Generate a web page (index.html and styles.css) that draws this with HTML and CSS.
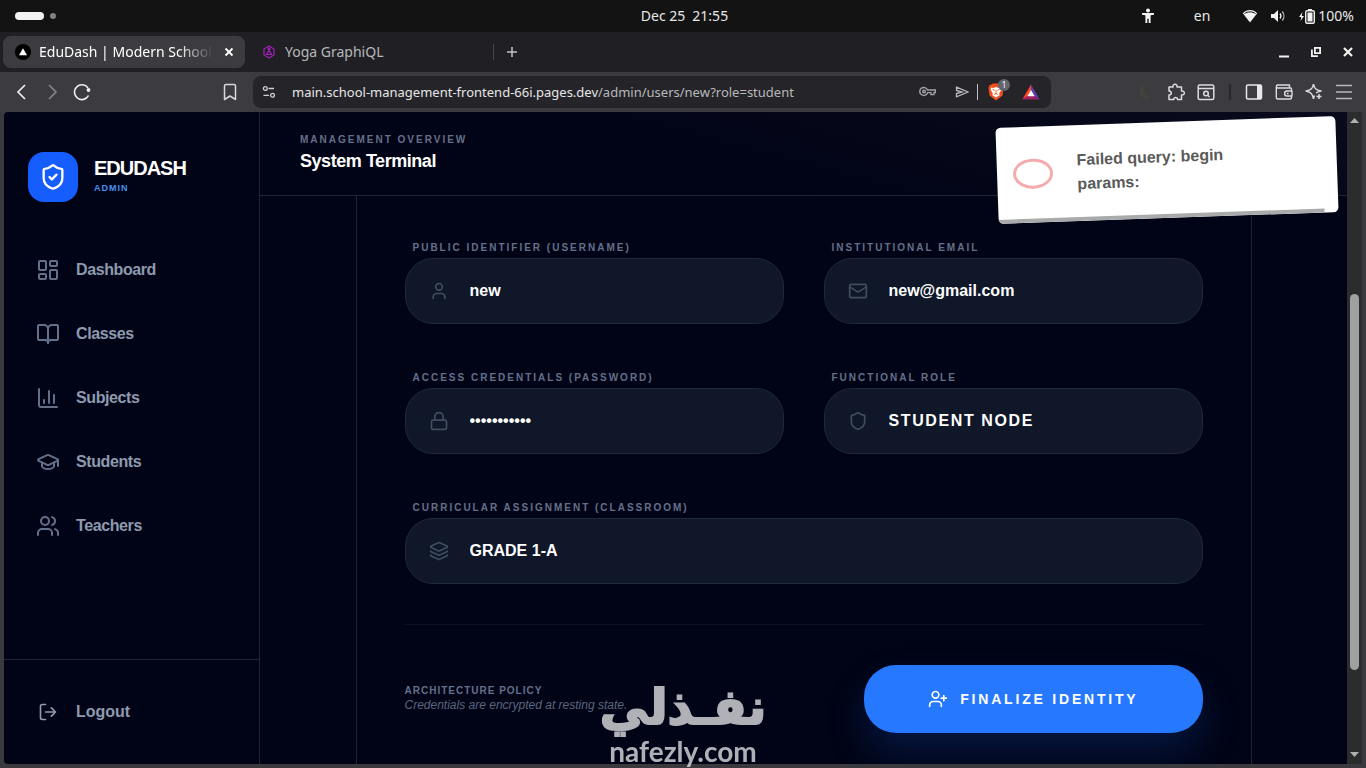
FILE: index.html
```html
<!DOCTYPE html>
<html lang="en">
<head>
<meta charset="utf-8">
<meta name="viewport" content="width=device-width, initial-scale=1">
<title>EduDash | Modern School</title>
<link rel="stylesheet" href="styles.css">
</head>
<body>
<div class="system-bar">
  <div class="workspaces"><span class="workspace-active"></span><span class="workspace-dot"></span></div>
  <time class="clock">Dec 25&ensp;21:55</time>
  <div class="tray">
    <svg class="tray-access" width="14" height="16" viewBox="0 0 14 16" fill="#f2f2f2"><circle cx="7" cy="2.500" r="2"/><path d="M1 5h12v1.800l-3.400.5V15H7.700v-4.200H6.300V15H4.400V7.300L1 6.800z"/></svg>
    <span class="tray-lang">en</span>
    <svg width="16" height="14" viewBox="0 0 16 14"><path d="M8 13.500.8 4.200C3 2 5.400 1 8 1s5 1 7.200 3.200z" fill="#f2f2f2"/><path d="M2.500 4.600C5.500 2.300 10.500 2.300 13.500 4.600" fill="none" stroke="#131313" stroke-width="1"/></svg>
    <svg width="16" height="14" viewBox="0 0 16 14" fill="none" stroke="#f2f2f2" stroke-width="1.300"><path d="M1 5h3l4-4v12L4 9H1z" fill="#f2f2f2" stroke="none"/><path d="M10 4.500a4 4 0 0 1 0 5"/><path d="M12.300 2.500a7 7 0 0 1 0 9" opacity=".7"/></svg>
    <div class="battery">
      <svg width="17" height="16" viewBox="0 0 17 16"><path d="M4.500 4 1 9h2.300L2.500 13 6 8H3.700z" fill="#f2f2f2"/><path d="M10 1h4v2h-4z" fill="#f2f2f2"/><rect x="7.700" y="2.700" width="8.600" height="12.600" rx="1.500" fill="none" stroke="#f2f2f2" stroke-width="1.400"/><path d="M9.500 4.500h5v9h-5z" fill="#f2f2f2"/></svg>
      <span>100%</span>
    </div>
  </div>
</div>

<div class="tab-strip">
  <div class="tab tab-active">
    <svg width="16" height="16" viewBox="0 0 16 16"><circle cx="8" cy="8" r="8" fill="#000"/><path d="m8 4.200 4 7H4z" fill="#fff"/></svg>
    <span class="tab-title tab-title-fade">EduDash | Modern School</span>
    <button class="tab-close" aria-label="Close tab"><svg width="10" height="10" viewBox="0 0 10 10" stroke="#fff" stroke-width="1.800"><path d="m1.500 1.500 7 7m0-7-7 7"/></svg></button>
  </div>
  <div class="tab tab-idle">
    <svg width="12" height="14" viewBox="0 0 12 14" fill="none" stroke="#a020b8" stroke-width="1.200"><path d="m6 1 5 3v6l-5 3-5-3V4z"/><path d="M6 4v2M3.500 9.500 6 5.500l2.500 4z"/><circle cx="6" cy="4" r=".8"/></svg>
    <span class="tab-title">Yoga GraphiQL</span>
  </div>
  <button class="new-tab" aria-label="New tab"><svg width="12" height="12" viewBox="0 0 12 12" stroke="#c4c4c8" stroke-width="1.500"><path d="M6 1v10M1 6h10"/></svg></button>
  <div class="window-controls">
    <button aria-label="Minimize"><svg width="12" height="12" viewBox="0 0 12 12"><path d="M1 9.500h10v2H1z" fill="#f2f2f2"/></svg></button>
    <button aria-label="Restore"><svg width="12" height="12" viewBox="0 0 12 12" fill="none" stroke="#f2f2f2" stroke-width="1.800"><path d="M4.900 1.900h5.200v5.200H4.900z"/><path d="M1.900 3.500v6.600h6"/></svg></button>
    <button aria-label="Close"><svg width="12" height="12" viewBox="0 0 12 12" stroke="#f2f2f2" stroke-width="2.200"><path d="m2 2 8 8m0-8-8 8"/></svg></button>
  </div>
</div>

<div class="toolbar">
  <button class="tool" aria-label="Back"><svg width="16" height="18" viewBox="0 0 16 18" fill="none" stroke="#eeeef0" stroke-width="1.700"><path d="M11 2 4 9l7 7"/></svg></button>
  <button class="tool" aria-label="Forward"><svg width="16" height="18" viewBox="0 0 16 18" fill="none" stroke="#85858a" stroke-width="1.700"><path d="m5 2 7 7-7 7"/></svg></button>
  <button class="tool" aria-label="Reload"><svg width="18" height="18" viewBox="0 0 18 18" fill="none" stroke="#eeeef0" stroke-width="1.600"><path d="M15.500 12.500A7.400 7.400 0 1 1 15 5"/><circle cx="15.500" cy="7" r="1.900" fill="#eeeef0" stroke="none"/></svg></button>
  <button class="tool tool-bookmark" aria-label="Bookmark"><svg width="14" height="18" viewBox="0 0 14 18" fill="none" stroke="#d8d8dc" stroke-width="1.500" stroke-linejoin="round"><path d="M1.500 3c0-1 .6-1.500 1.500-1.500h8c1 0 1.500.5 1.500 1.500v13.500L7 13l-5.500 3.500z"/></svg></button>
  <div class="address-bar">
    <svg width="14" height="14" viewBox="0 0 14 14" fill="none" stroke="#d0d0d4" stroke-width="1.300"><circle cx="3.300" cy="3.500" r="1.900"/><path d="M6.500 3.500h5.500M1.500 10.300h5.500"/><circle cx="10.500" cy="10.300" r="1.900"/></svg>
    <button class="url">main.school-management-frontend-66i.pages.dev<span class="url-path">/admin/users/new?role=student</span></button>
    <svg width="18" height="12" viewBox="0 0 18 12" fill="none" stroke="#a2a2a8" stroke-width="1.400"><path d="M8.500 4h7.800v2.600h-1.300v2h-3v-2H8.600A4 4 0 1 1 8.500 4z"/><circle cx="5" cy="5.500" r="1.300"/></svg>
    <svg class="send" width="14" height="12" viewBox="0 0 14 12" fill="none" stroke="#b8b8bd" stroke-width="1.300"><path d="M1.500 1.200 13 6 1.500 10.800V7.500L7 6 1.500 4.500z"/></svg>
    <span class="address-divider"></span>
    <span class="shield">
      <svg width="16" height="18" viewBox="0 0 16 18"><path d="m3.500 1.500 1-1h7l1 1 2 .5 1 3-1 7.500-6.500 5L1.500 12.500.5 5l1-3z" fill="#f0501e"/><path d="m3 4.500 2.200.6L8 4l2.800 1.100L13 4.500l.3 2.500-2 3 .2 2.200L8 14.500l-3.500-2.300.2-2.200-2-3z" fill="#fff"/><path d="m4.500 6.500 2.200.8m4.800-.8-2.200.8M8 7v3.500m-2 1 2-1 2 1" stroke="#f0501e" stroke-width=".9" fill="none"/></svg>
      <span class="shield-count">1</span>
    </span>
    <svg width="18" height="16" viewBox="0 0 18 16"><path d="M9 .5.300 15.500 9 10z" fill="#ff4724"/><path d="M.3 15.500h17.400L9 10z" fill="#9e1f63"/><path d="M9 .5l8.700 15L9 10z" fill="#5b3bb0"/><path d="m9 6 3.700 6.200H5.300z" fill="#fff"/></svg>
  </div>
  <button class="tool" aria-label="Dark mode"><svg width="12" height="16" viewBox="0 0 12 16"><path d="M5 1a7 7 0 1 0 6 12A9 9 0 0 1 5 1z" fill="#42423a"/></svg></button>
  <button class="tool" aria-label="Extensions"><svg width="20" height="20" viewBox="0 0 20 20" fill="none" stroke="#dcdce0" stroke-width="1.500" stroke-linejoin="round"><path d="M3 5h4c-.7-3.800 4.700-3.800 4 0h4.500v4c3.800-.5 3.800 4.500 0 4v4.500h-4c.3-2.800-4-2.800-3.700 0H3V13c3-.2 3-4 0-4z"/></svg></button>
  <button class="tool" aria-label="Search page"><svg width="18" height="18" viewBox="0 0 18 18" fill="none" stroke="#dcdce0" stroke-width="1.500"><rect x="1.200" y="2" width="15.600" height="14.500" rx="1.500"/><path d="M1 5.500h16M10.500 12l2 2"/><circle cx="9" cy="10.500" r="2.300"/></svg></button>
  <span class="tool-divider"></span>
  <button class="tool" aria-label="Side panel"><svg width="18" height="18" viewBox="0 0 18 18"><rect x="1.500" y="2" width="15" height="14" rx="1.500" fill="none" stroke="#e8e8ec" stroke-width="1.500"/><path d="M12 2h4.500v14H12z" fill="#e8e8ec"/></svg></button>
  <button class="tool" aria-label="Wallet"><svg width="18" height="18" viewBox="0 0 18 18" fill="none" stroke="#dcdce0" stroke-width="1.400" stroke-linejoin="round"><path d="M16.500 8V6c0-.7-.3-1-1-1h-13c-1.500 0-1.500-3 0-3h12v3M1.300 4v10.500c0 1 .5 1.500 1.500 1.500h12.500c.8 0 1.200-.5 1.200-1.200V13M17 8h-5c-3.200 0-3.200 5 0 5h5z"/><path d="M12 10.500h1.500"/></svg></button>
  <button class="tool" aria-label="Assistant"><svg width="18" height="18" viewBox="0 0 18 18" fill="none" stroke="#dcdce0" stroke-width="1.500" stroke-linejoin="round"><path d="M8.500 1c.7 4.500 2.500 6 7.500 7-2.500.6-4 1.200-5 2M8.500 16c-.7-5-2.500-7-7.500-8 5-1 6.800-2.500 7.500-7M8.500 16c.2-1.500.5-2.500 1-3.500M14 11v5M11.500 13.500h5"/></svg></button>
  <button class="tool" aria-label="Menu"><svg width="18" height="16" viewBox="0 0 18 16" stroke="#b8b8bc" stroke-width="1.600"><path d="M1 1.500h16M1 8h16M1 14.500h16"/></svg></button>
</div>

<div class="viewport">
  <aside class="sidebar">
    <div class="brand">
      <span class="brand-mark"><svg class="icon" width="28" height="28" viewBox="0 0 24 24"><path d="M20 13c0 5-3.500 7.500-7.660 8.950a1 1 0 0 1-.67-.01C7.500 20.500 4 18 4 13V6a1 1 0 0 1 1-1c2 0 4.500-1.200 6.240-2.720a1.170 1.170 0 0 1 1.520 0C14.510 3.810 17 5 19 5a1 1 0 0 1 1 1z"/><path d="m9 12 2 2 4-4"/></svg></span>
      <div class="brand-text"><strong class="brand-name">EDUDASH</strong><span class="brand-role">ADMIN</span></div>
    </div>
    <nav class="nav">
      <a class="nav-link" href="#dashboard"><svg class="icon" width="24" height="24" viewBox="0 0 24 24"><rect x="3" y="3" width="7" height="9" rx="1"/><rect x="14" y="3" width="7" height="5" rx="1"/><rect x="14" y="12" width="7" height="9" rx="1"/><rect x="3" y="16" width="7" height="5" rx="1"/></svg>Dashboard</a>
      <a class="nav-link" href="#classes"><svg class="icon" width="24" height="24" viewBox="0 0 24 24"><path d="M12 7v14"/><path d="M3 18a1 1 0 0 1-1-1V4a1 1 0 0 1 1-1h5a4 4 0 0 1 4 4 4 4 0 0 1 4-4h5a1 1 0 0 1 1 1v13a1 1 0 0 1-1 1h-6a3 3 0 0 0-3 3 3 3 0 0 0-3-3z"/></svg>Classes</a>
      <a class="nav-link" href="#subjects"><svg class="icon" width="24" height="24" viewBox="0 0 24 24"><path d="M3 3v16a2 2 0 0 0 2 2h16M18 17V9M13 17V5M8 17v-3"/></svg>Subjects</a>
      <a class="nav-link" href="#students"><svg class="icon" width="24" height="24" viewBox="0 0 24 24"><path d="M21.420 10.920a1 1 0 0 0-.02-1.840L12.830 5.180a2 2 0 0 0-1.660 0L2.600 9.080a1 1 0 0 0 0 1.830l8.570 3.910a2 2 0 0 0 1.660 0z"/><path d="M22 10v6M6 12.500V16a6 3 0 0 0 12 0v-3.500"/></svg>Students</a>
      <a class="nav-link" href="#teachers"><svg class="icon" width="24" height="24" viewBox="0 0 24 24"><path d="M16 21v-2a4 4 0 0 0-4-4H6a4 4 0 0 0-4 4v2M22 21v-2a4 4 0 0 0-3-3.870M16 3.130a4 4 0 0 1 0 7.750"/><circle cx="9" cy="7" r="4"/></svg>Teachers</a>
    </nav>
    <div class="sidebar-foot">
      <button class="logout"><svg class="icon" width="20" height="20" viewBox="0 0 24 24"><path d="M9 21H5a2 2 0 0 1-2-2V5a2 2 0 0 1 2-2h4M16 17l5-5-5-5M21 12H9"/></svg>Logout</button>
    </div>
  </aside>

  <main class="main">
    <header class="page-head">
      <p class="eyebrow">MANAGEMENT OVERVIEW</p>
      <h1 class="page-title">System Terminal</h1>
    </header>
    <form class="card">
      <div class="fields">
        <div class="field">
          <label class="label" for="username">PUBLIC IDENTIFIER (USERNAME)</label>
          <div class="control"><svg class="icon" width="20" height="20" viewBox="0 0 24 24"><path d="M19 21v-2a4 4 0 0 0-4-4H9a4 4 0 0 0-4 4v2"/><circle cx="12" cy="7" r="4"/></svg><input class="value" id="username" type="text" value="new"></div>
        </div>
        <div class="field">
          <label class="label" for="email">INSTITUTIONAL EMAIL</label>
          <div class="control"><svg class="icon" width="20" height="20" viewBox="0 0 24 24"><rect x="2" y="4" width="20" height="16" rx="2"/><path d="m22 7-8.970 5.700a1.940 1.940 0 0 1-2.060 0L2 7"/></svg><input class="value" id="email" type="email" value="new@gmail.com"></div>
        </div>
        <div class="field">
          <label class="label" for="password">ACCESS CREDENTIALS (PASSWORD)</label>
          <div class="control"><svg class="icon" width="20" height="20" viewBox="0 0 24 24"><rect x="3" y="11" width="18" height="11" rx="2"/><path d="M7 11V7a5 5 0 0 1 10 0v4"/></svg><input class="value" id="password" type="password" value="password123"></div>
        </div>
        <div class="field">
          <label class="label" for="role">FUNCTIONAL ROLE</label>
          <div class="control"><svg class="icon" width="20" height="20" viewBox="0 0 24 24"><path d="M20 13c0 5-3.500 7.500-7.660 8.950a1 1 0 0 1-.67-.01C7.500 20.500 4 18 4 13V6a1 1 0 0 1 1-1c2 0 4.500-1.200 6.240-2.720a1.170 1.170 0 0 1 1.520 0C14.510 3.810 17 5 19 5a1 1 0 0 1 1 1z"/></svg><select class="value value-role" id="role"><option>STUDENT NODE</option></select></div>
        </div>
        <div class="field field-wide">
          <label class="label" for="classroom">CURRICULAR ASSIGNMENT (CLASSROOM)</label>
          <div class="control"><svg class="icon" width="20" height="20" viewBox="0 0 24 24"><path d="M12.830 2.180a2 2 0 0 0-1.660 0L2.600 6.080a1 1 0 0 0 0 1.830l8.580 3.910a2 2 0 0 0 1.660 0l8.580-3.900a1 1 0 0 0 0-1.830z"/><path d="M2 12a1 1 0 0 0 .58.910l8.600 3.910a2 2 0 0 0 1.650 0l8.580-3.900A1 1 0 0 0 22 12M2 17a1 1 0 0 0 .58.910l8.600 3.910a2 2 0 0 0 1.650 0l8.580-3.900A1 1 0 0 0 22 17"/></svg><select class="value" id="classroom"><option>GRADE 1-A</option></select></div>
        </div>
      </div>
      <div class="actions">
        <div class="policy">
          <p class="policy-title">ARCHITECTURE POLICY</p>
          <p class="policy-note">Credentials are encrypted at resting state.</p>
        </div>
        <button class="submit" type="button"><svg class="icon" width="20" height="20" viewBox="0 0 24 24"><path d="M16 21v-2a4 4 0 0 0-4-4H6a4 4 0 0 0-4 4v2M19 8v6M22 11h-6"/><circle cx="9" cy="7" r="4"/></svg>FINALIZE IDENTITY</button>
      </div>
    </form>
  </main>

  <div class="scrollbar" aria-hidden="true">
    <svg class="scroll-arrow" width="9" height="16" viewBox="0 0 9 16"><path d="M0 11h9L4.500 6z" fill="#b0b0b0"/></svg>
    <span class="scroll-before"></span><span class="scroll-thumb"></span><span class="scroll-after"></span>
    <svg class="scroll-arrow" width="9" height="16" viewBox="0 0 9 16"><path d="M0 4h9L4.500 9z" fill="#b0b0b0"/></svg>
  </div>

  <div class="toast" role="alert">
    <span class="toast-icon"></span>
    <p class="toast-text">Failed query: begin<br>params:</p>
    <span class="toast-progress"></span>
  </div>
</div>

<div class="watermark">
  <span class="watermark-ar" lang="ar" dir="rtl">نفـذلي</span>
  <span class="watermark-en">nafezly.com</span>
</div>
</body>
</html>
```
FILE: styles.css
```css
* { box-sizing: border-box; }

body {
  position: relative;
  display: flex;
  flex-direction: column;
  height: 100vh;
  margin: 0;
  overflow: hidden;
  background: #3a3a3e;
  color: #fff;
  font-family: "Liberation Sans", Arial, sans-serif;
}

p, h1 { margin: 0; }

button {
  display: flex;
  align-items: center;
  justify-content: center;
  padding: 0;
  border: 0;
  background: none;
  color: inherit;
  font: inherit;
}

svg { display: block; flex: none; }

.icon {
  fill: none;
  stroke: currentColor;
  stroke-width: 2;
  stroke-linecap: round;
  stroke-linejoin: round;
}

/* Desktop bar */
.system-bar {
  display: grid;
  grid-template-columns: 1fr auto 1fr;
  align-items: center;
  flex: none;
  height: 32px;
  padding: 0 12px 0 15px;
  background: #131313;
  color: #e8e8e8;
  font: 14px/20px "Noto Sans", sans-serif;
}

.workspaces { display: flex; align-items: center; gap: 6px; }
.workspace-active { width: 29px; height: 8px; border-radius: 4px; background: #f2f2f2; }
.workspace-dot { width: 6px; height: 6px; border-radius: 50%; background: #828282; }
.tray { display: flex; align-items: center; justify-content: flex-end; gap: 12px; }
.tray-access { margin-right: 27px; }
.tray-lang { margin-right: 20px; }
.battery { display: flex; align-items: center; gap: 3px; }

/* Tabs */
.tab-strip {
  display: flex;
  align-items: center;
  flex: none;
  height: 40px;
  padding: 0 6px 0 3px;
  background: #202024;
  font: 14px/20px "Noto Sans", sans-serif;
}

.tab { display: flex; align-items: center; gap: 8px; height: 32px; }
.tab-active { width: 242px; padding: 0 8px 0 12px; border-radius: 8px; background: #3b3b40; }
.tab-idle { width: 249px; height: 16px; gap: 10px; padding-left: 18px; border-right: 1px solid #46464b; color: #b8b8bc; }
.tab-title { flex: 1; overflow: hidden; white-space: nowrap; }
.tab-title-fade { -webkit-mask-image: linear-gradient(90deg, #000 80%, transparent); mask-image: linear-gradient(90deg, #000 80%, transparent); }
.tab-close { width: 16px; height: 16px; }
.new-tab { width: 36px; height: 32px; }
.window-controls { display: flex; gap: 8px; margin-left: auto; }
.window-controls button { width: 24px; height: 24px; }

/* Navigation toolbar */
.toolbar {
  display: flex;
  align-items: center;
  flex: none;
  height: 40px;
  padding: 0 7px;
  background: #3b3b40;
  font: 13px/20px "Noto Sans", sans-serif;
}

.tool { flex: none; width: 30px; height: 30px; }
.tool-bookmark { margin-left: 118px; }
.tool-divider { width: 2px; height: 16px; margin: 0 8px; background: #29292d; }

.address-bar {
  display: flex;
  align-items: center;
  flex: 1;
  min-width: 0;
  height: 32px;
  gap: 16px;
  margin: 0 80px 0 8px;
  padding: 0 11px 0 9px;
  border-radius: 8px;
  background: #252529;
}

.url {
  flex: 1;
  justify-content: flex-start;
  min-width: 0;
  overflow: hidden;
  color: #e6e6e8;
  white-space: nowrap;
}
.url-path { color: #b8b8bc; }
.address-divider { width: 1px; height: 16px; margin-left: -8px; background: #c0c0c4; }
.shield { position: relative; margin: 0 2px 0 -6px; }
.send { margin-left: 2px; }
.shield-count {
  position: absolute;
  top: -4px;
  right: -6px;
  width: 12px;
  height: 12px;
  border-radius: 50%;
  background: #62646f;
  color: #fff;
  font-size: 8px;
  line-height: 12px;
  text-align: center;
}

/* Page frame */
.viewport {
  position: relative;
  display: flex;
  flex: 1;
  min-height: 0;
  margin: 0 4px 4px;
  overflow: hidden;
  border-radius: 4px;
  background: #010416;
}

.sidebar {
  display: flex;
  flex-direction: column;
  flex: none;
  width: 256px;
  border-right: 1px solid #202434;
}

.brand { display: flex; align-items: center; gap: 16px; padding: 40px 24px 36px; }
.brand-mark {
  display: grid;
  place-items: center;
  width: 50px;
  height: 50px;
  border-radius: 16px;
  background: #155dfc;
}
.brand-text { display: flex; flex-direction: column; gap: 2px; padding-bottom: 4px; }
.brand-name { font-size: 20px; line-height: 24px; letter-spacing: -1px; }
.brand-role { color: #4a8ff0; font-size: 9px; font-weight: 700; line-height: 12px; letter-spacing: 1px; }

.nav { display: flex; flex: 1; flex-direction: column; gap: 8px; padding: 4px 24px; }
.nav-link {
  display: flex;
  align-items: center;
  gap: 16px;
  height: 56px;
  padding: 0 8px;
  color: #8e9aae;
  font-size: 16px;
  font-weight: 700;
  letter-spacing: -0.025em;
  text-decoration: none;
}
.nav-link .icon { color: #64708a; }

.sidebar-foot { padding: 24px; border-top: 1px solid #202434; }
.logout { gap: 18px; height: 56px; padding: 0 10px; color: #8e9aae; font-size: 16px; font-weight: 700; }

/* Main column */
.main { display: flex; flex: 1; flex-direction: column; min-width: 0; overflow: hidden; }
.page-head {
  flex: none;
  height: 84px;
  padding: 20px 40px 0;
  border-bottom: 1px solid #202434;
  background: linear-gradient(15deg, #010416 40%, #090b1c);
}
.eyebrow, .label, .policy-title { color: #64708a; font-size: 10px; font-weight: 700; }
.eyebrow { line-height: 16px; letter-spacing: 2px; }
.page-title { font-size: 18px; line-height: 26px; letter-spacing: -0.025em; }

.card {
  flex: 1 0 auto;
  width: calc(100% - 80px);
  max-width: 896px;
  margin: 0 auto;
  padding: 42px 48px 0;
  border: solid #202434;
  border-width: 0 1px;
}
.fields { display: grid; grid-template-columns: 1fr 1fr; gap: 44px 40px; }
.field { display: flex; flex-direction: column; min-width: 0; }
.field-wide { grid-column: 1 / -1; }
.label { padding-left: 8px; line-height: 20px; letter-spacing: 2px; }

.control {
  display: flex;
  align-items: center;
  gap: 21px;
  height: 66px;
  padding: 0 23px;
  border: 1px solid #1f2939;
  border-radius: 28px;
  background: #0f1728;
  color: #414d61;
}
.value {
  flex: 1;
  min-width: 0;
  height: 48px;
  margin: 0;
  padding: 0;
  border: 0;
  outline: 0;
  appearance: none;
  background: none;
  color: #fff;
  font: 700 16px/24px "Liberation Sans", Arial, sans-serif;
}
.value-role { letter-spacing: 0.1em; }

.actions {
  display: flex;
  align-items: center;
  justify-content: space-between;
  margin-top: 40px;
  padding-top: 40px;
  border-top: 1px solid #0c1424;
}
.policy { padding-bottom: 2px; }
.policy-title { line-height: 14px; letter-spacing: 1px; }
.policy-note { color: #5a667e; font-size: 12px; font-style: italic; line-height: 14px; }
.submit {
  gap: 12px;
  height: 68px;
  padding: 0 64px;
  border-radius: 32px;
  background: #2678ff;
  box-shadow: 0 20px 40px rgba(30, 100, 230, 0.2);
  font-size: 14px;
  font-weight: 700;
  letter-spacing: 0.2em;
}

/* Scrollbar */
.scrollbar {
  display: flex;
  flex: none;
  flex-direction: column;
  align-items: center;
  width: 15px;
  background: #2b2c2c;
}
.scroll-before { flex: 166; }
.scroll-thumb { flex: 376; width: 9px; border-radius: 5px; background: #9fa0a0; }
.scroll-after { flex: 78; }

/* Toast */
.toast {
  position: absolute;
  top: 10px;
  right: 25px;
  display: flex;
  align-items: center;
  gap: 24px;
  width: 340px;
  height: 96px;
  padding: 0 16px 2px;
  overflow: hidden;
  border-radius: 5px;
  background: #fff;
  color: #5a5a5a;
  transform: rotate(-2deg);
}
.toast-icon { width: 40px; height: 30px; border: 3px solid #f5abab; border-radius: 50%; }
.toast-text { font-size: 16px; font-weight: 700; line-height: 24px; }
.toast-progress { position: absolute; bottom: 0; left: 0; width: 96%; height: 4px; background: #a9abab; }

/* Watermark */
.watermark {
  position: absolute;
  bottom: 0;
  left: 50%;
  display: flex;
  flex-direction: column;
  align-items: center;
  color: #cdcdd2;
  opacity: 0.86;
  pointer-events: none;
  transform: translateX(-50%);
}
.watermark-ar { font: 700 49px/52px "DejaVu Sans", sans-serif; -webkit-text-stroke: 2px #cdcdd2; }
.watermark-en { font: 700 28px/34px Lato, sans-serif; }
```
